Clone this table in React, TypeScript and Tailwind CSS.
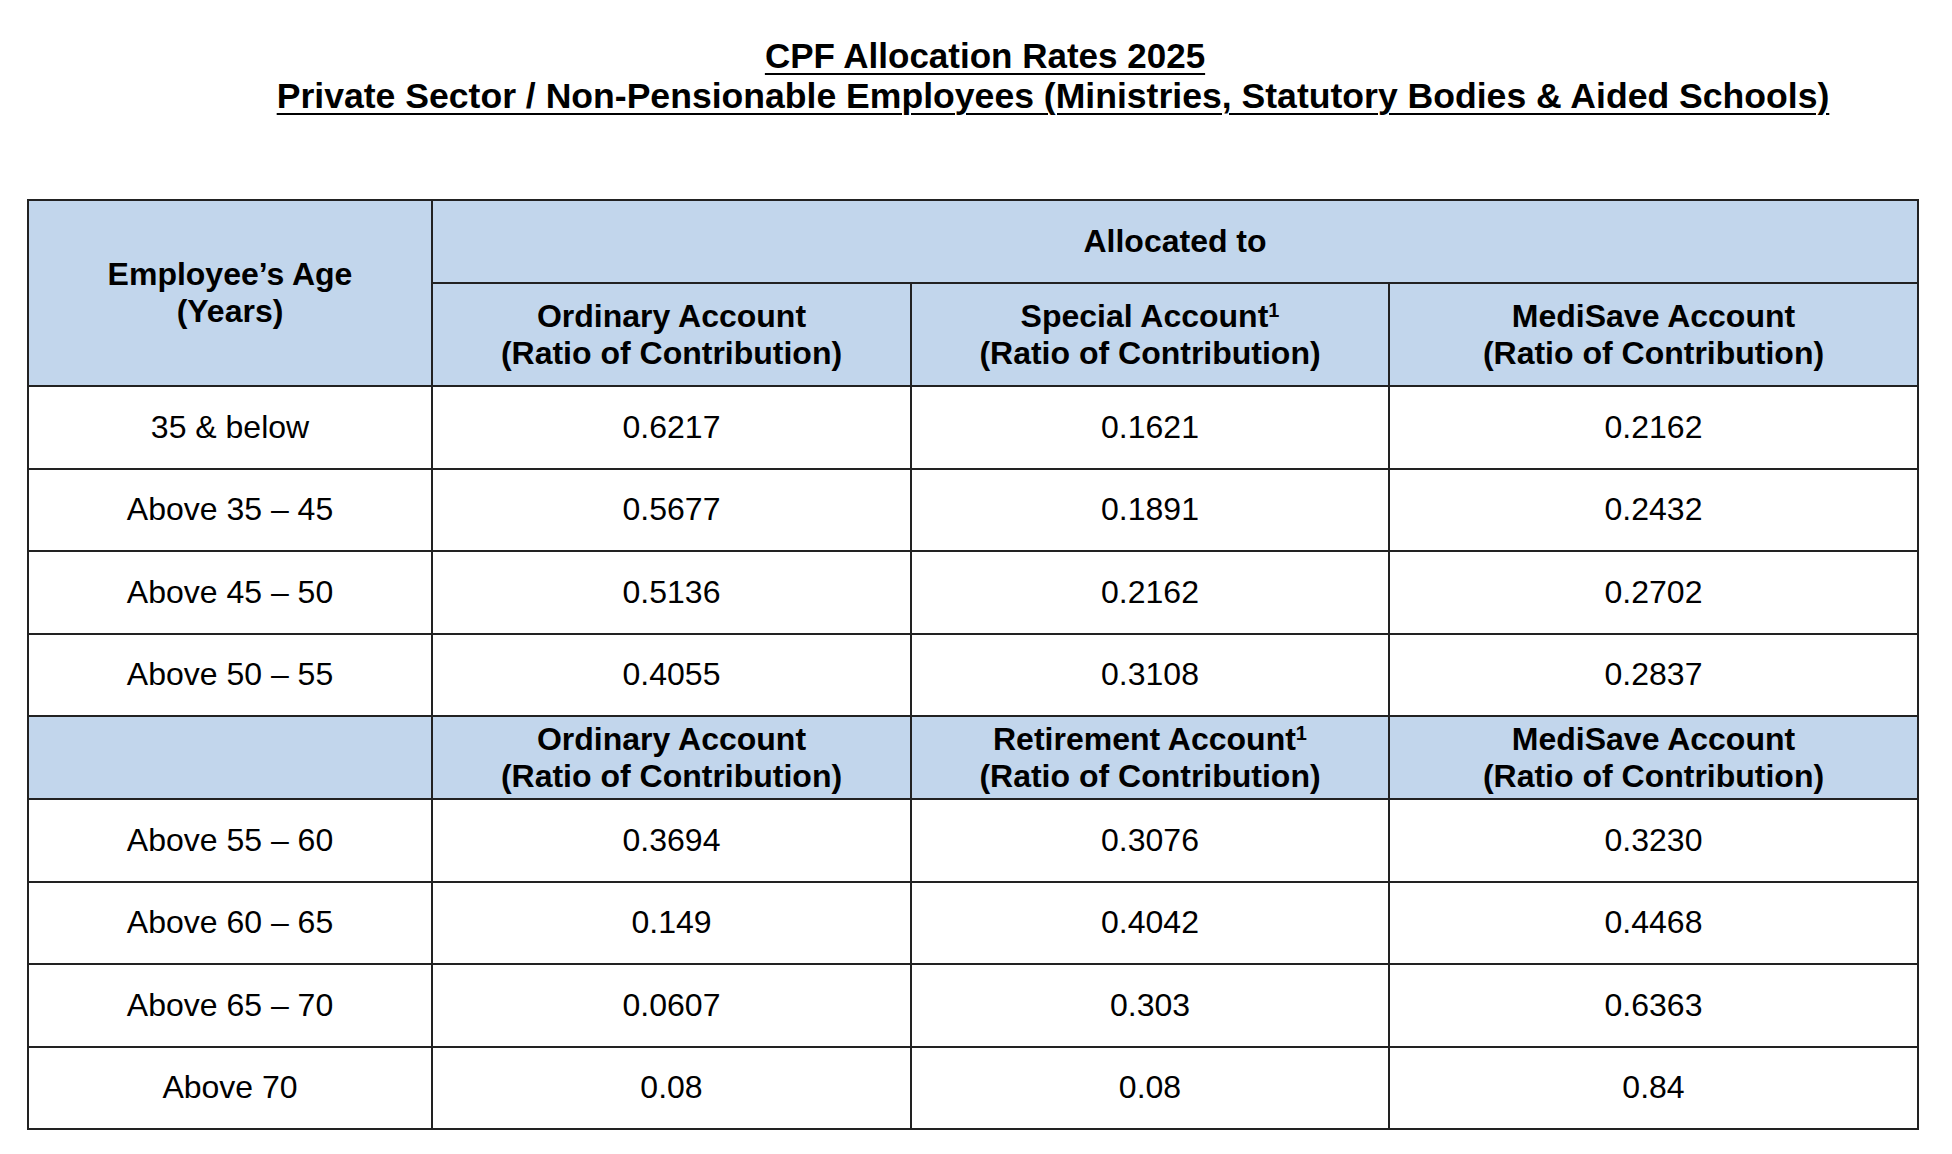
const FONT = "font-['Liberation_Sans',Arial,Helvetica,sans-serif]";

type Row = { age: string; oa: string; mid: string; ma: string };

// Age bands up to 55 (OA / SA / MA)
const ROWS_UNDER_55: Row[] = [
  { age: "35 & below", oa: "0.6217", mid: "0.1621", ma: "0.2162" },
  { age: "Above 35 – 45", oa: "0.5677", mid: "0.1891", ma: "0.2432" },
  { age: "Above 45 – 50", oa: "0.5136", mid: "0.2162", ma: "0.2702" },
  { age: "Above 50 – 55", oa: "0.4055", mid: "0.3108", ma: "0.2837" },
];

// Age bands above 55 (OA / RA / MA)
const ROWS_OVER_55: Row[] = [
  { age: "Above 55 – 60", oa: "0.3694", mid: "0.3076", ma: "0.3230" },
  { age: "Above 60 – 65", oa: "0.149", mid: "0.4042", ma: "0.4468" },
  { age: "Above 65 – 70", oa: "0.0607", mid: "0.303", ma: "0.6363" },
  { age: "Above 70", oa: "0.08", mid: "0.08", ma: "0.84" },
];

const cell = "border-2 border-[#222] text-center align-middle p-0";
const head = `${cell} bg-[#c2d6ec] font-bold`;

function AccountHead({ name, note }: { name: string; note?: boolean }) {
  return (
    <th className={head}>
      {name}
      {note && <sup className="text-[20px]">1</sup>}
      <br />
      (Ratio of Contribution)
    </th>
  );
}

function DataRows({ rows }: { rows: Row[] }) {
  return (
    <>
      {rows.map((r) => (
        <tr key={r.age} className="h-[82.5px]">
          <td className={cell}>{r.age}</td>
          <td className={cell}>{r.oa}</td>
          <td className={cell}>{r.mid}</td>
          <td className={cell}>{r.ma}</td>
        </tr>
      ))}
    </>
  );
}

export default function App() {
  return (
    <div className={`${FONT} min-h-[1154px] w-[1952px] bg-white text-black`}>
      {/* Title block */}
      <div className="pt-[36px] font-bold leading-[40px]">
        <p className="pl-[18px] text-center text-[35px]">
          <span className="underline decoration-2 underline-offset-[5px]">CPF Allocation Rates 2025</span>
        </p>
        <p className="pl-[154px] text-center text-[35.6px]">
          <span className="underline decoration-2 underline-offset-[5px]">
            Private Sector / Non-Pensionable Employees (Ministries, Statutory Bodies &amp; Aided Schools)
          </span>
        </p>
      </div>

      <div className="ml-[27px] mt-[83px] w-[1892px]">
        <table className="w-full table-fixed border-collapse text-[32px] leading-[37px]">
          <colgroup>
            <col className="w-[404px]" />
            <col className="w-[479px]" />
            <col className="w-[478px]" />
            <col />
          </colgroup>
          <thead>
            <tr className="h-[83px]">
              <th rowSpan={2} className={head}>
                Employee’s Age
                <br />
                (Years)
              </th>
              <th colSpan={3} className={head}>
                Allocated to
              </th>
            </tr>
            <tr className="h-[103px]">
              <AccountHead name="Ordinary Account" />
              <AccountHead name="Special Account" note />
              <AccountHead name="MediSave Account" />
            </tr>
          </thead>
          <tbody>
            <DataRows rows={ROWS_UNDER_55} />
            <tr className="h-[83px]">
              <th className={head}></th>
              <AccountHead name="Ordinary Account" />
              <AccountHead name="Retirement Account" note />
              <AccountHead name="MediSave Account" />
            </tr>
            <DataRows rows={ROWS_OVER_55} />
          </tbody>
        </table>
      </div>
    </div>
  );
}
